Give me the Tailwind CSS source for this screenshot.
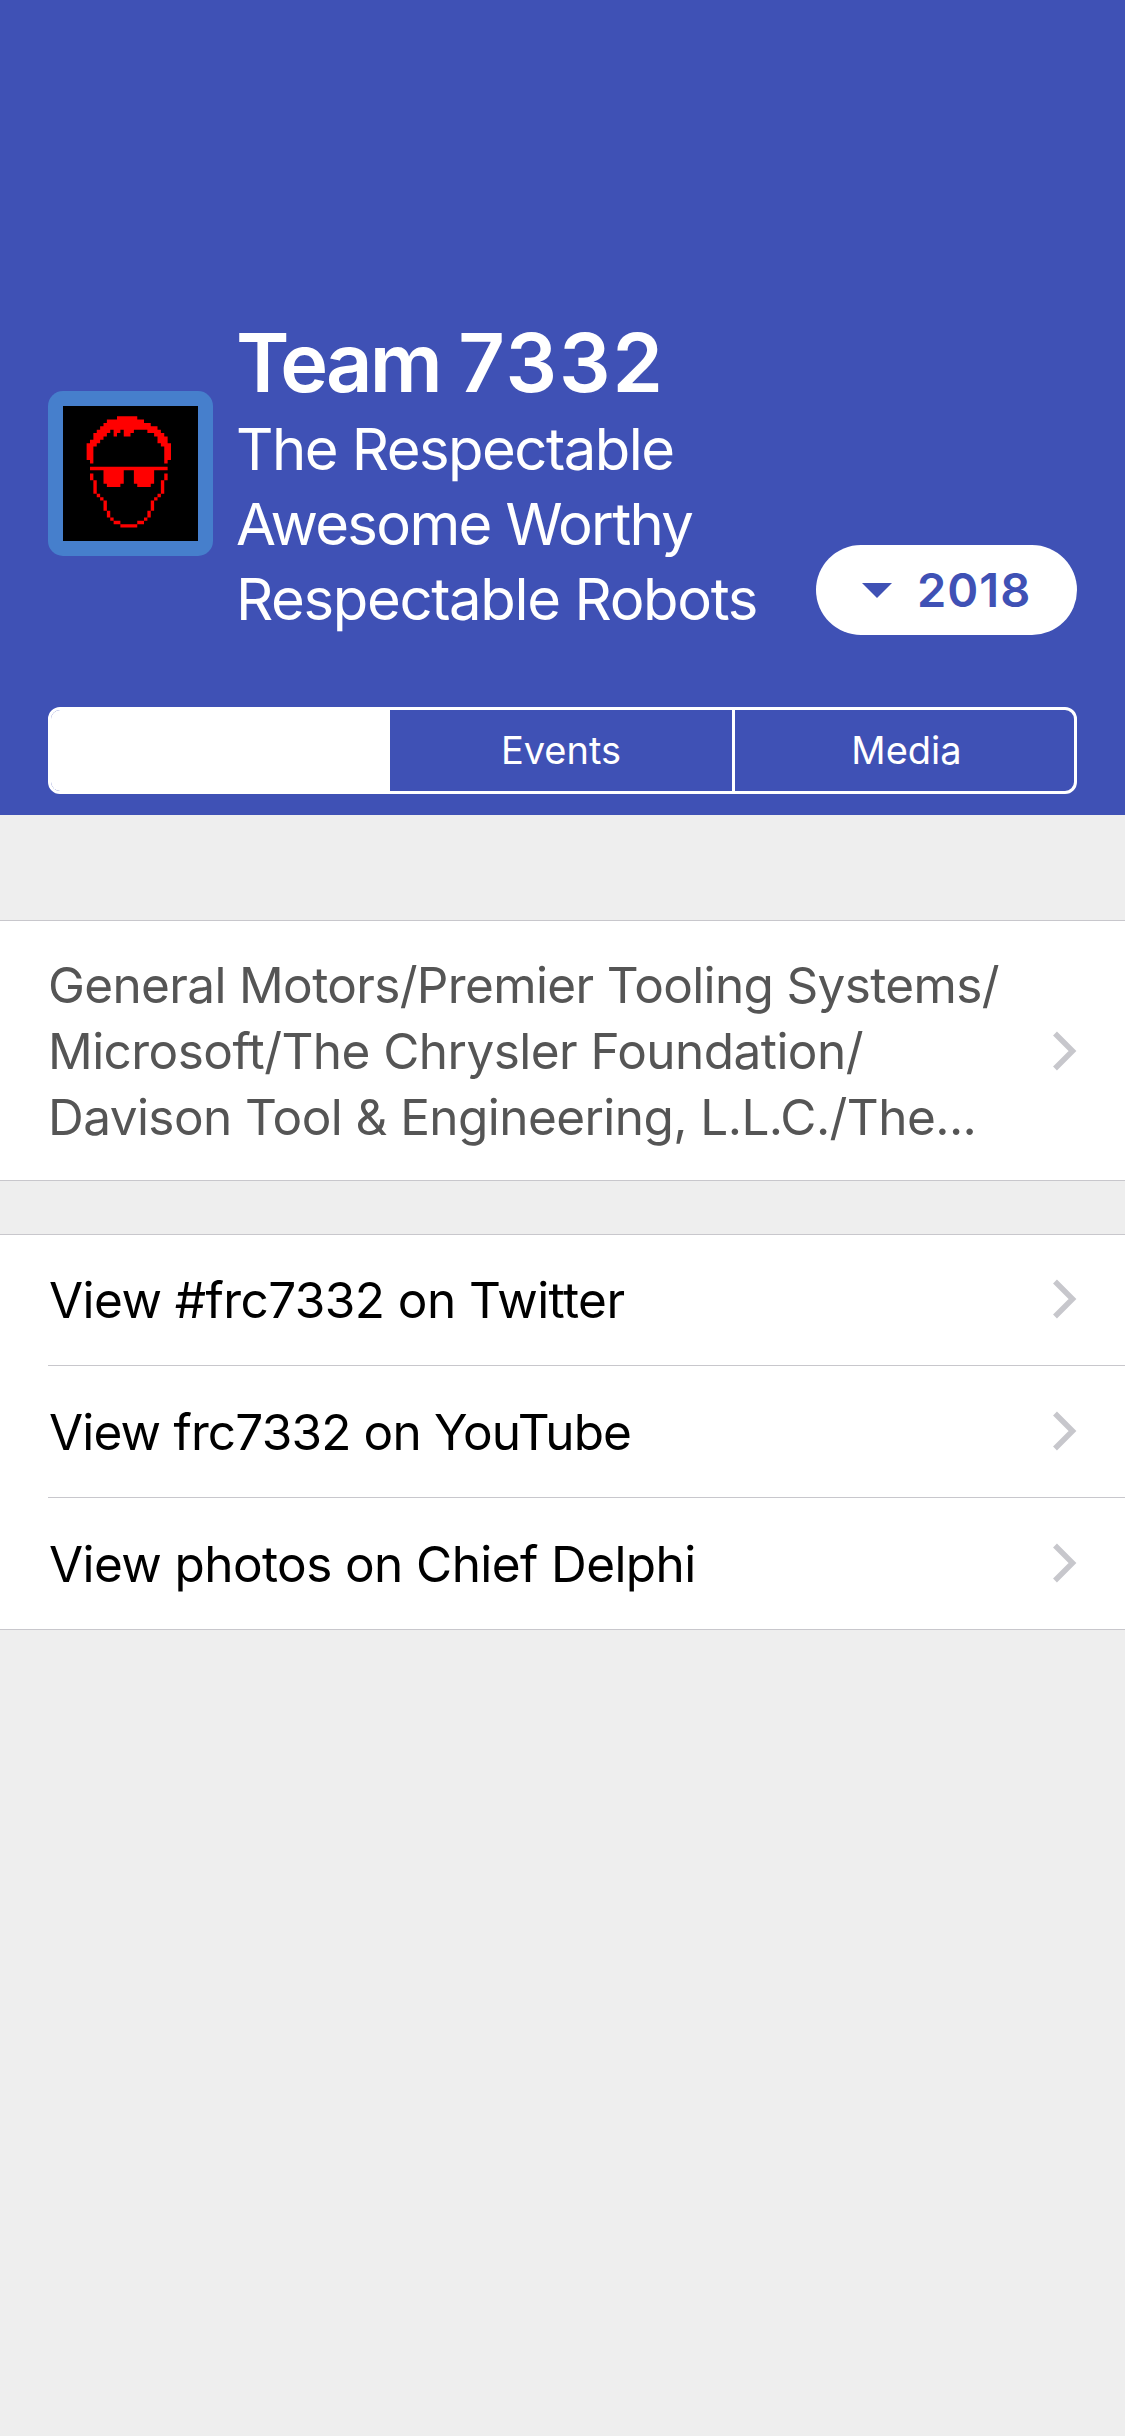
<!DOCTYPE html>
<html lang="en"><head><meta charset="utf-8"><title>Team 7332</title>
<script src="https://cdn.jsdelivr.net/npm/@tailwindcss/browser@4"></script></head>
<body class="w-[1125px] h-[2436px] bg-[#eeeeee] overflow-hidden font-['Inter',sans-serif]">
<header class="h-[815px] bg-[#3f51b5] px-12 text-white flex flex-col">
<div class="flex h-[707px] pt-[318px]">
<!-- Team avatar, 40x40 pixel art -->
<div class="mt-[73px] size-[165px] shrink-0 rounded-[15px] bg-[#467fcc] p-[15px]">
<svg class="block size-[135px] bg-black" viewBox="0 0 40 40" fill="#f00"><path d="M16 3h6v1h-6zM13 4h11v1h-11zM12 5h14v1h-14zM11 6h17v1h-17zM10 7h4v1h-4zM15 7h2v1h-2zM18 7h3v1h-3zM25 7h4v1h-4zM9 8h4v1h-4zM15 8h1v1h-1zM18 8h2v1h-2zM27 8h3v1h-3zM9 9h3v1h-3zM28 9h3v1h-3zM8 10h3v1h-3zM28 10h3v1h-3zM7 11h3v1h-3zM29 11h3v1h-3zM7 12h2v4h-2zM30 12h2v4h-2zM8 16h1v1h-1zM30 16h1v1h-1zM8 18h23v1h-23zM12 19h6v4h-1v1h-4v-1h-1zM21 19h6v4h-1v1h-4v-1h-1zM8 20h1v2h-1zM30 20h1v2h-1zM9 22h1v4h-1zM29 22h1v4h-1zM10 26h1v1h-1zM28 26h1v1h-1zM11 27h1v1h-1zM27 27h1v1h-1zM12 28h1v3h-1zM26 28h1v3h-1zM13 31h1v2h-1zM25 31h1v2h-1zM14 33h1v1h-1zM24 33h1v1h-1zM15 34h2v1h-2zM22 34h2v1h-2zM17 35h5v1h-5z"/></svg>
</div>
<div class="ml-6 w-[555px] shrink-0">
<h1 class="-ml-px text-[81px] leading-[90px] font-semibold whitespace-nowrap"><span class="tracking-[-2.9px]">Team </span><span class="ml-px tracking-[2px]">7332</span></h1>
<p class="mt-[4px] -ml-px text-[58px] leading-[75px] whitespace-nowrap"><span class="tracking-[-1.53px]">The Respectable</span><br><span class="tracking-[-1.65px]">Awesome Worthy</span><br><span class="tracking-[-1.36px]">Respectable Robots</span></p>
</div>
<button class="ml-6 mt-[227px] h-[90px] w-[261px] shrink-0 rounded-full bg-white text-[#3f51b5] flex items-center pl-[46px]">
<svg class="w-[30px] h-[15px]" viewBox="0 0 30 15"><path d="M0 0h30L15 15z" fill="#3f51b5"/></svg>
<span class="ml-[25px] text-[47px] font-semibold tracking-[1px]">2018</span></button>
</div>
<nav class="h-[87px] shrink-0 rounded-xl border-[3px] border-white flex overflow-hidden text-[38px]">
<div class="w-[339px] bg-white"></div>
<div class="w-[345px] border-r-[3px] border-white flex items-center justify-center">Events</div>
<div class="flex-1 pl-1 flex items-center justify-center">Media</div>
</nav>
</header>
<main>
<section class="mt-[105px] h-[261px] border-y border-[#c8c7cc] bg-white px-12 flex items-center justify-between">
<p class="text-[49.5px] leading-[66px] text-[#555] whitespace-nowrap"><span class="tracking-[-0.65px]">General Motors/Premier Tooling Systems/</span><br><span class="tracking-[-0.55px]">Microsoft/The Chrysler Foundation/</span><br><span class="tracking-[-0.57px]">Davison Tool &amp; Engineering, L.L.C./The...</span></p>
<svg class="w-6 h-10 shrink-0" viewBox="0 0 24 40" fill="none" stroke="#c7c7cc" stroke-width="5.5"><path d="M2 2.5L19.5 20L2 37.5"/></svg>
</section>
<section class="mt-[53px] border-y border-[#c8c7cc] bg-white pl-12 text-[49.5px] text-black">
<div class="h-[131px] border-b border-[#c8c7cc] pl-px pr-12 flex items-center justify-between"><span class="tracking-[-0.57px]">View #frc7332 on Twitter</span><svg class="mb-[3px] w-6 h-10 shrink-0" viewBox="0 0 24 40" fill="none" stroke="#c7c7cc" stroke-width="5.5"><path d="M2 2.5L19.5 20L2 37.5"/></svg></div>
<div class="h-[132px] border-b border-[#c8c7cc] pl-px pr-12 pt-px flex items-center justify-between"><span class="tracking-[-0.83px]">View frc7332 on YouTube</span><svg class="mb-[3px] w-6 h-10 shrink-0" viewBox="0 0 24 40" fill="none" stroke="#c7c7cc" stroke-width="5.5"><path d="M2 2.5L19.5 20L2 37.5"/></svg></div>
<div class="h-[131px] pl-px pr-12 pt-px flex items-center justify-between"><span class="tracking-[-0.6px]">View photos on Chief Delphi</span><svg class="mb-[3px] w-6 h-10 shrink-0" viewBox="0 0 24 40" fill="none" stroke="#c7c7cc" stroke-width="5.5"><path d="M2 2.5L19.5 20L2 37.5"/></svg></div>
</section>
</main>
</body></html>
